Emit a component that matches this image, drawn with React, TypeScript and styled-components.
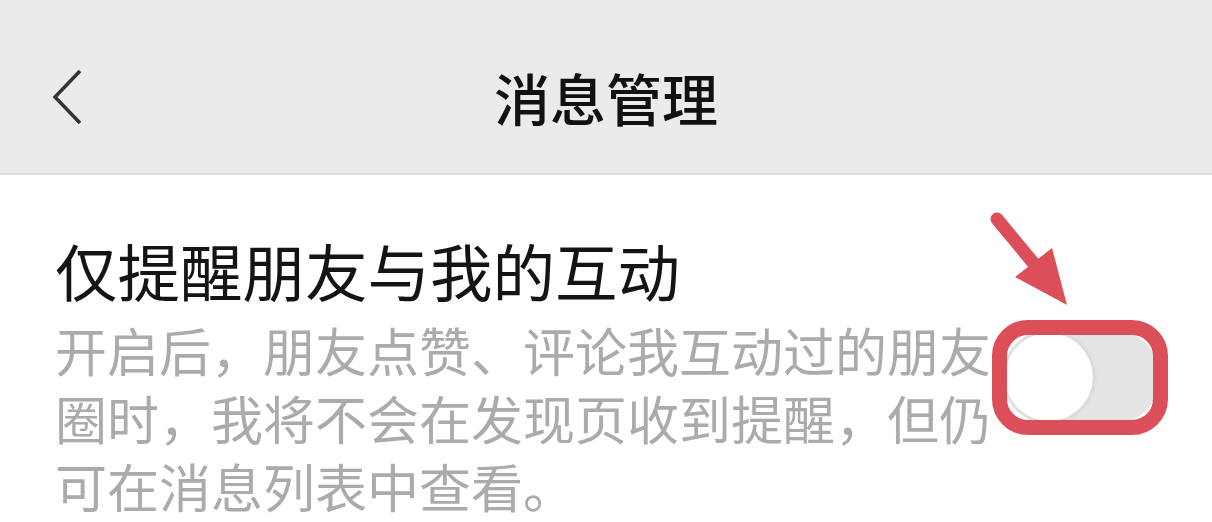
import React from "react";
import styled, {createGlobalStyle} from "styled-components";

const GlobalStyle = createGlobalStyle`
    html, body {
        margin: 0;
        padding: 0;
        background: #ffffff;
    }
    body {
        font-family: "Noto Sans CJK SC", "Noto Sans", sans-serif;
    }
`;

const Page = styled.div`
    width: 1212px;
    height: 522px;
    overflow: hidden;
    background: #ffffff;
`;

const Header = styled.header`
    height: 175px;
    display: grid;
    grid-template-columns: 1fr auto 1fr;
    align-items: center;
    padding: 20px 0 0 0;
    box-sizing: border-box;
    background: #ebebeb;
    border-bottom: 2px solid #dcdcdc;
`;

const BackButton = styled.button`
    justify-self: start;
    margin-left: 44px;
    padding: 0;
    border: none;
    background: none;
    width: 44px;
    height: 60px;
    display: flex;
    align-items: center;
    justify-content: center;
    cursor: pointer;
`;

const Title = styled.h1`
    margin: 0;
    font-size: 56px;
    font-weight: 500;
    color: #111111;
    line-height: 1;
`;

const SettingRow = styled.section`
    display: flex;
    align-items: center;
    padding: 58px 52px 0 55px;
`;

const TextBlock = styled.div`
    flex: 0 0 940px;
`;

const ItemTitle = styled.div`
    font-size: 62.5px;
    line-height: 74px;
    color: #141414;
    font-weight: 400;
`;

const Description = styled.p`
    margin: 9px 0 0 0;
    font-size: 52px;
    line-height: 68px;
    color: #ababab;
`;

const SwitchWrap = styled.div`
    position: relative;
    margin-left: auto;
`;

const Track = styled.div<{$on: boolean}>`
    width: 158px;
    height: 94px;
    border-radius: 47px;
    background: ${p => (p.$on ? "#07c160" : "#e4e4e4")};
    display: flex;
    align-items: center;
    justify-content: ${p => (p.$on ? "flex-end" : "flex-start")};
    padding: 0 3px;
    box-sizing: border-box;
`;

const Knob = styled.div`
    width: 88px;
    height: 88px;
    border-radius: 50%;
    background: #ffffff;
    box-shadow: 1px 0 4px rgba(0, 0, 0, 0.1);
`;

const HighlightBox = styled.div`
    position: absolute;
    left: -10px;
    top: -10px;
    width: 176px;
    height: 115px;
    box-sizing: border-box;
    border: 15px solid #dc4f58;
    border-radius: 36px;
    pointer-events: none;
`;

const Arrow = styled.svg`
    position: absolute;
    left: -12px;
    top: -118px;
    pointer-events: none;
`;

const App: React.FC = () => {
    const on = false;
    return (
        <Page>
            <GlobalStyle />
            <Header>
                <BackButton aria-label="返回">
                    <svg width="34" height="56" viewBox="0 0 34 56">
                        <polyline points="31,2 6,28 31,54" fill="none" stroke="#333" strokeWidth="3.5" />
                    </svg>
                </BackButton>
                <Title>消息管理</Title>
                <div />
            </Header>
            <SettingRow>
                <TextBlock>
                    <ItemTitle>仅提醒朋友与我的互动</ItemTitle>
                    <Description>
                        开启后，朋友点赞、评论我互动过的朋友圈时，我将不会在发现页收到提醒，但仍可在消息列表中查看。
                    </Description>
                </TextBlock>
                <SwitchWrap>
                    <Track $on={on}>
                        <Knob />
                    </Track>
                    <HighlightBox />
                    <Arrow width="90" height="100" viewBox="0 0 90 100">
                        <line x1="7" y1="7" x2="50" y2="59" stroke="#dc4f58" strokeWidth="13" strokeLinecap="round" />
                        <polygon points="25,65 62,36 77,93" fill="#dc4f58" />
                    </Arrow>
                </SwitchWrap>
            </SettingRow>
        </Page>
    );
};

export default App;
